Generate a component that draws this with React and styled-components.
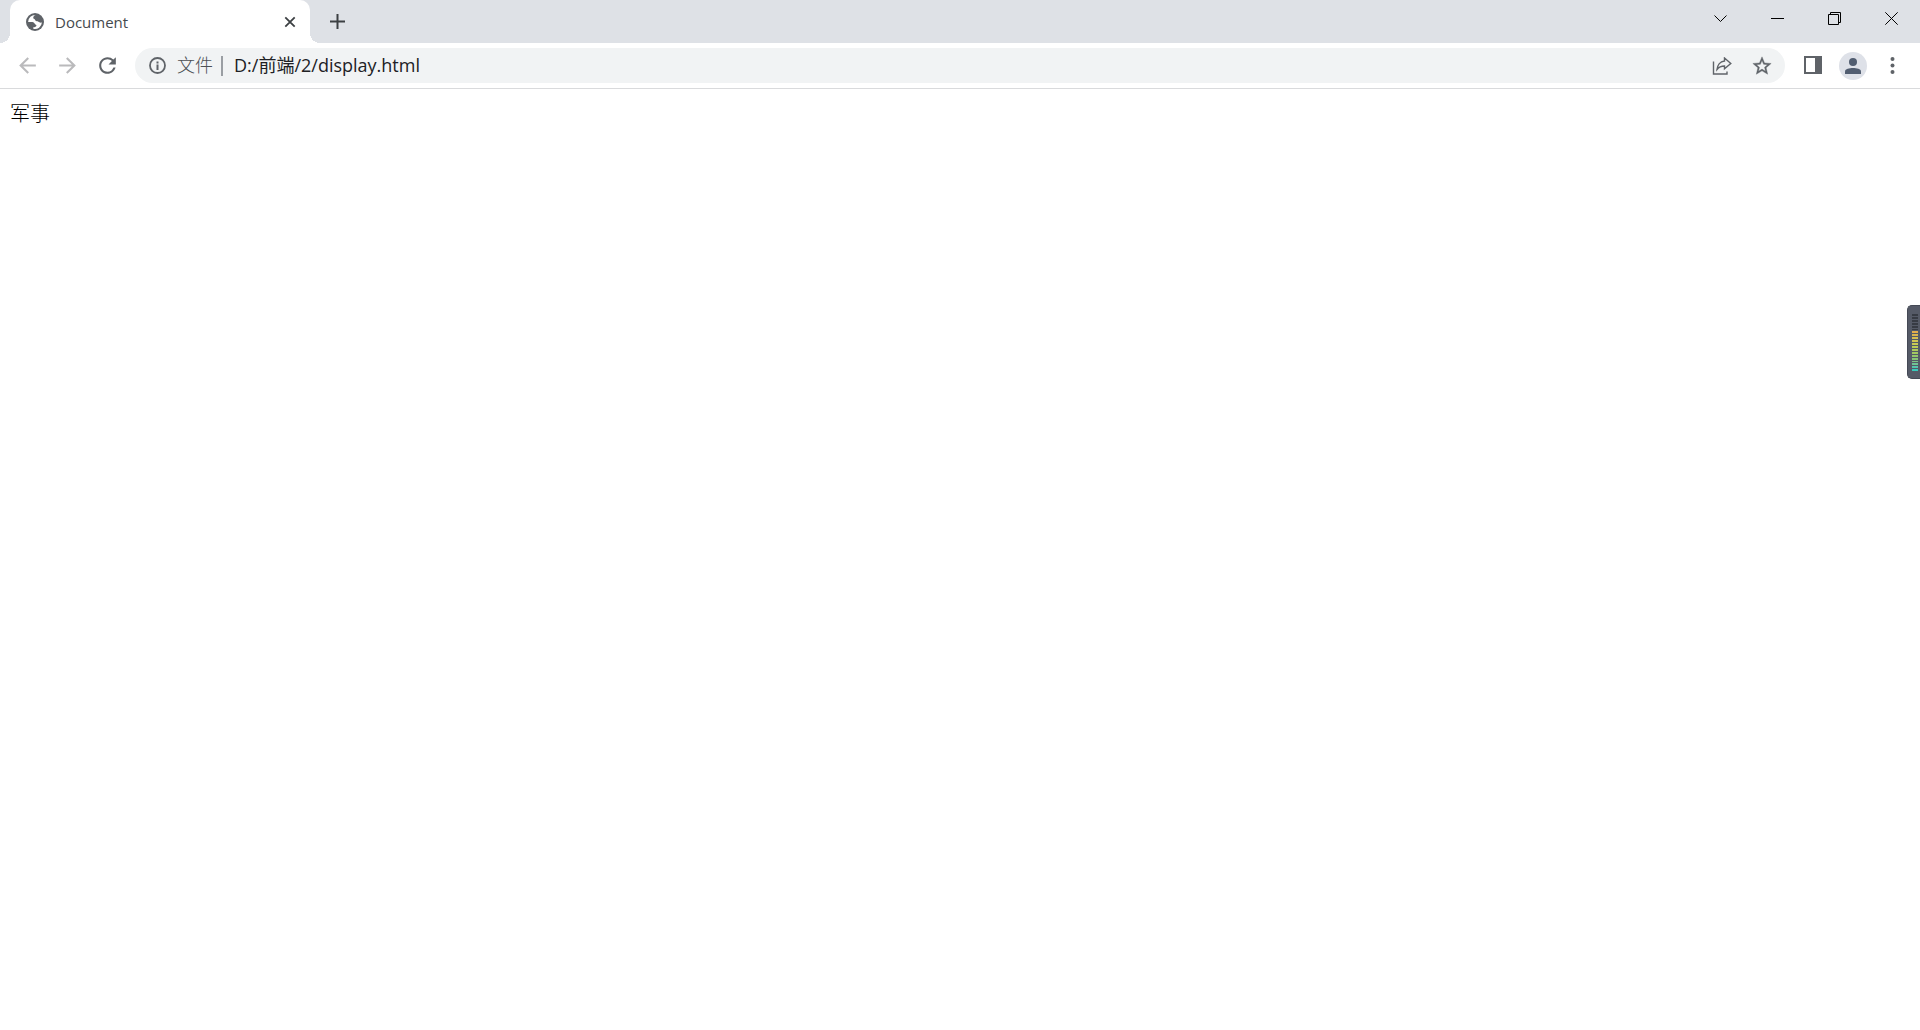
import React from 'react';
import styled, { createGlobalStyle } from 'styled-components';

const GlobalStyle = createGlobalStyle`
  *, *::before, *::after { box-sizing: border-box; }
  body { margin: 0; background: #fff; font-family: "Open Sans", "Noto Sans CJK SC", sans-serif; }
`;

const Window = styled.div`
  display: flex;
  flex-direction: column;
  min-height: 100vh;
`;

const TabStrip = styled.header`
  display: flex;
  align-items: flex-start;
  height: 43px;
  padding-left: 10px;
  background: #dee1e6;
`;

const Tab = styled.div`
  position: relative;
  display: flex;
  align-items: center;
  gap: 11px;
  width: 300px;
  height: 43px;
  padding: 0 12px 0 16px;
  border-radius: 10px 10px 0 0;
  background: #fff;

  &::before, &::after {
    content: "";
    position: absolute;
    bottom: 0;
    width: 10px;
    height: 10px;
  }
  &::before {
    right: 100%;
    background: radial-gradient(circle at 0 0, transparent 10px, #fff 10px);
  }
  &::after {
    left: 100%;
    background: radial-gradient(circle at 100% 0, transparent 10px, #fff 10px);
  }
`;

const TabTitle = styled.span`
  flex: 1;
  color: #45494d;
  font-size: 15px;
  line-height: 20px;
`;

const IconButton = styled.button`
  display: flex;
  align-items: center;
  justify-content: center;
  flex: none;
  width: ${(p) => p.$width || 35}px;
  height: ${(p) => p.$height || 35}px;
  padding: 0;
  border: 0;
  border-radius: ${(p) => (p.$square ? 0 : '50%')};
  background: none;
  color: ${(p) => p.$color || '#5f6368'};
  svg { display: block; }
`;

const NewTab = styled(IconButton)`
  margin: 4px 0 0 10px;
`;

const WindowControls = styled.div`
  display: flex;
  margin-left: auto;
`;

const Toolbar = styled.nav`
  display: flex;
  align-items: center;
  gap: 5px;
  height: 46px;
  padding: 0 10px;
  border-bottom: 1px solid #d9dadc;
  background: #fff;
`;

const Omnibox = styled.div`
  display: flex;
  align-items: center;
  flex: 1;
  height: 35px;
  margin: 0 5px;
  padding: 0 3px 0 5px;
  border-radius: 18px;
  background: #f1f3f4;
`;

const Scheme = styled.label`
  padding: 0 8px 2px 2px;
  color: #4c5055;
  font-size: 18px;
  line-height: 24px;
  font-weight: 300;
`;

const Divider = styled.span`
  width: 2px;
  height: 20px;
  background: #9a9ea3;
`;

const Address = styled.input`
  flex: 1;
  min-width: 0;
  height: 32px;
  padding: 0 0 3px 11px;
  border: 0;
  outline: 0;
  background: transparent;
  color: #202124;
  font-family: inherit;
  font-size: 18px;
`;

const Avatar = styled.span`
  display: flex;
  align-items: center;
  justify-content: center;
  width: 28px;
  height: 28px;
  border-radius: 50%;
  background: #dee1e8;
`;

const Page = styled.main`
  flex: 1;
  padding: 10px;
  color: #000;
  font-size: 20px;
  font-weight: 300;
  line-height: 30px;
`;

const Meter = styled.aside`
  position: fixed;
  top: 305px;
  right: 0;
  display: flex;
  flex-direction: column;
  gap: 1px;
  width: 13px;
  height: 74px;
  padding: 8px 2px 7px 4px;
  border: 1px solid #444955;
  border-right: 0;
  border-radius: 5px 0 0 5px;
  background: #555a67;
`;

const Level = styled.span`
  flex: 1;
  background: ${(p) => p.$color};
`;

const levels = [
  '#373b44', '#373b44', '#373b44', '#373b44', '#373b44', '#373b44',
  '#e5ae4c', '#dcb44e', '#d8bf51', '#d1c552', '#c9ca54', '#bccb56', '#aeca5b',
  '#a2c962', '#94c76a', '#88c676', '#7cc785', '#70c694', '#56c6ac', '#37cabb',
];

const Icon = ({ size = 21, children }) => (
  <svg width={size} height={size} viewBox="0 0 24 24" fill="currentColor" aria-hidden="true">{children}</svg>
);

const Thin = ({ children }) => (
  <svg width="13" height="13" viewBox="0 0 13 13" fill="none" stroke="#000" aria-hidden="true">{children}</svg>
);

export default function App() {
  return (
    <>
      <GlobalStyle />
      <Window>
        <TabStrip>
          <Tab>
            <svg width="18" height="18" viewBox="0 0 18 18" aria-hidden="true">
              <circle cx="9" cy="9" r="9" fill="#5f6368" />
              <path fill="#fff" d="M9.800 2.100c-1.300.3-2.200 1-2.500 2.200-.2.900.3 1.600 1.100 1.800.6.200.5 1 1 1.500.8.900 2 .5 3 1.100 1 .5 1.500 1.300 3.500.8A7 7 0 0 1 7.300 15.800V14.300c1.300 0 2.500-.3 3-1.200.4-.8-.1-1.500-.9-1.700-.8-.3-.8-1.300-1.700-1.900C6.300 8.700 4.100 9.200 2.100 9A7 7 0 0 1 9.800 2.100z" />
            </svg>
            <TabTitle>Document</TabTitle>
            <IconButton $width={16} $height={16} $color="#3c4043" aria-label="Close tab">
              <svg width="12" height="12" viewBox="0 0 12 12" stroke="currentColor" strokeWidth="1.800" aria-hidden="true"><path d="M1.300 1.300l9.400 9.400M10.700 1.300l-9.400 9.400" /></svg>
            </IconButton>
          </Tab>
          <NewTab $color="#3c4043" aria-label="New tab">
            <svg width="15" height="15" viewBox="0 0 15 15" stroke="currentColor" strokeWidth="2" aria-hidden="true"><path d="M7.500 0v15M0 7.500h15" /></svg>
          </NewTab>
          <WindowControls>
            <IconButton $square $width={57} $height={37} aria-label="Search tabs"><Thin><path d="M.5 3.500l6 6 6-6" /></Thin></IconButton>
            <IconButton $square $width={57} $height={37} aria-label="Minimize"><Thin><path d="M0 6.500h13" /></Thin></IconButton>
            <IconButton $square $width={57} $height={37} aria-label="Restore"><Thin><path d="M.5 2.500h10v10H.5zM2.500 2.500v-2h10v10h-2" /></Thin></IconButton>
            <IconButton $square $width={57} $height={37} aria-label="Close"><Thin><path d="M.3.300l12.400 12.400M12.700.300L.3 12.700" /></Thin></IconButton>
          </WindowControls>
        </TabStrip>
        <Toolbar>
          <IconButton $color="#bababc" aria-label="Back"><Icon size={25}><path d="M20 11H7.830l5.590-5.590L12 4l-8 8 8 8 1.410-1.410L7.830 13H20v-2z" /></Icon></IconButton>
          <IconButton $color="#bababc" aria-label="Forward"><Icon size={25}><path d="M12 4l-1.410 1.410L16.170 11H4v2h12.170l-5.580 5.590L12 20l8-8z" /></Icon></IconButton>
          <IconButton aria-label="Reload"><Icon size={25}><path d="M17.650 6.350A7.958 7.958 0 0 0 12 4c-4.420 0-7.990 3.580-7.990 8s3.570 8 7.990 8c3.730 0 6.840-2.550 7.730-6h-2.080A5.990 5.990 0 0 1 12 18c-3.310 0-6-2.690-6-6s2.690-6 6-6c1.660 0 3.140.690 4.220 1.780L13 11h7V4l-2.350 2.350z" /></Icon></IconButton>
          <Omnibox>
            <IconButton aria-label="Site information">
              <svg width="17" height="17" viewBox="0 0 17 17" aria-hidden="true"><circle cx="8.500" cy="8.500" r="7.500" fill="none" stroke="currentColor" strokeWidth="1.800" /><path fill="currentColor" d="M7.500 4.500h2v2h-2zM7.500 7.500h2V13h-2z" /></svg>
            </IconButton>
            <Scheme htmlFor="address">文件</Scheme>
            <Divider />
            <Address id="address" defaultValue="D:/前端/2/display.html" spellCheck={false} />
            <IconButton $width={40} aria-label="Share">
              <svg width="20" height="18" viewBox="0 0 20 18" fill="none" stroke="currentColor" strokeWidth="1.400" aria-hidden="true">
                <path d="M1.500 4.500V17h13.500v-2.500" />
                <path d="M12.500 1l6.300 5.500-6.300 5.300V9c-3.500 0-5.500.9-7.500 3.500C5.400 8.500 7.800 4.400 12.500 4z" />
              </svg>
            </IconButton>
            <IconButton $width={40} aria-label="Bookmark"><Icon size={22}><path stroke="currentColor" strokeWidth=".4" d="M22 9.240l-7.190-.620L12 2 9.190 8.630 2 9.240l5.460 4.730L5.820 21 12 17.270 18.180 21l-1.630-7.030L22 9.240zM12 15.400l-3.760 2.270 1-4.280-3.320-2.880 4.380-.380L12 6.100l1.710 4.040 4.380.380-3.320 2.880 1 4.280L12 15.400z" /></Icon></IconButton>
          </Omnibox>
          <IconButton aria-label="Side panel">
            <svg width="19" height="19" viewBox="-1 0 19 19" aria-hidden="true"><path fill="currentColor" fillRule="evenodd" d="M0 0h18v18H0zM2 2v14h9V2z" /></svg>
          </IconButton>
          <IconButton $color="#515d70" aria-label="Profile">
            <Avatar><svg width="16" height="16" viewBox="0 0 16 16" fill="currentColor" aria-hidden="true"><circle cx="8" cy="4" r="4" /><path d="M0 16v-2.500C0 10.800 4.500 10 8 10s8 .8 8 3.500V16z" /></svg></Avatar>
          </IconButton>
          <IconButton aria-label="Menu">
            <svg width="5" height="17" viewBox="0 0 5 17" fill="currentColor" aria-hidden="true"><circle cx="2.500" cy="2" r="2" /><circle cx="2.500" cy="8.500" r="2" /><circle cx="2.500" cy="15" r="2" /></svg>
          </IconButton>
        </Toolbar>
        <Page>军事</Page>
      </Window>
      <Meter aria-label="Level meter">
        {levels.map((color, i) => <Level key={i} $color={color} />)}
      </Meter>
    </>
  );
}
